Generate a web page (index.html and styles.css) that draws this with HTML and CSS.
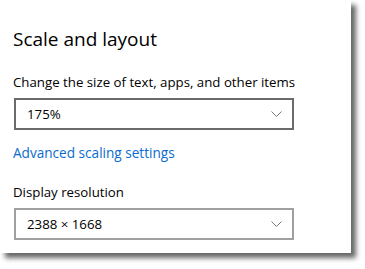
FILE: index.html
```html
<!DOCTYPE html>
<html lang="en">
<head>
  <meta charset="UTF-8">
  <title>Scale and layout</title>
  <link rel="stylesheet" href="styles.css">
</head>
<body>
  <div class="panel">
    <h1 class="title">Scale and layout</h1>

    <div class="label">Change the size of text, apps, and other items</div>
    <div class="select dark">
      <span>175%</span>
      <svg class="chevron" width="11" height="6" viewBox="0 0 11 6"><path d="M0.5 0.5 L5.5 5.5 L10.5 0.5" fill="none" stroke="#777" stroke-width="1"/></svg>
    </div>

    <a class="link" href="#">Advanced scaling settings</a>

    <div class="label">Display resolution</div>
    <div class="select light">
      <span>2388 × 1668</span>
      <svg class="chevron" width="11" height="6" viewBox="0 0 11 6"><path d="M0.5 0.5 L5.5 5.5 L10.5 0.5" fill="none" stroke="#777" stroke-width="1"/></svg>
    </div>
  </div>
</body>
</html>
```

FILE: styles.css
```css
body {
  margin: 0;
  height: 269px;
  background-color: #fff;
  font-family: "Open Sans", "Noto Sans", sans-serif;
  color: #000;
}

.panel {
  width: 351px;
  height: 253px;
  box-sizing: border-box;
  padding: 25px 0 0 13px;
  background-color: #fff;
  box-shadow: 5px 5px 5px rgba(0, 0, 0, 0.6);
}

.title {
  margin: 0 0 20px;
  font-size: 19px;
  font-weight: 400;
  line-height: 28px;
}

.label {
  font-size: 13.25px;
  line-height: 18px;
  margin-bottom: 7px;
}

.select {
  width: 280px;
  height: 32px;
  box-sizing: border-box;
  margin-left: 1px;
  padding: 0 10px 0 11px;
  display: flex;
  align-items: center;
  justify-content: space-between;
  font-size: 13.25px;
}

.select.dark {
  border: 2px solid #6b6b6b;
}

.select.light {
  border: 2px solid #a0a0a0;
}

.link {
  display: block;
  margin: 14px 0 21px;
  font-size: 13.6px;
  line-height: 18px;
  color: #0a6ccf;
  text-decoration: none;
}
```
